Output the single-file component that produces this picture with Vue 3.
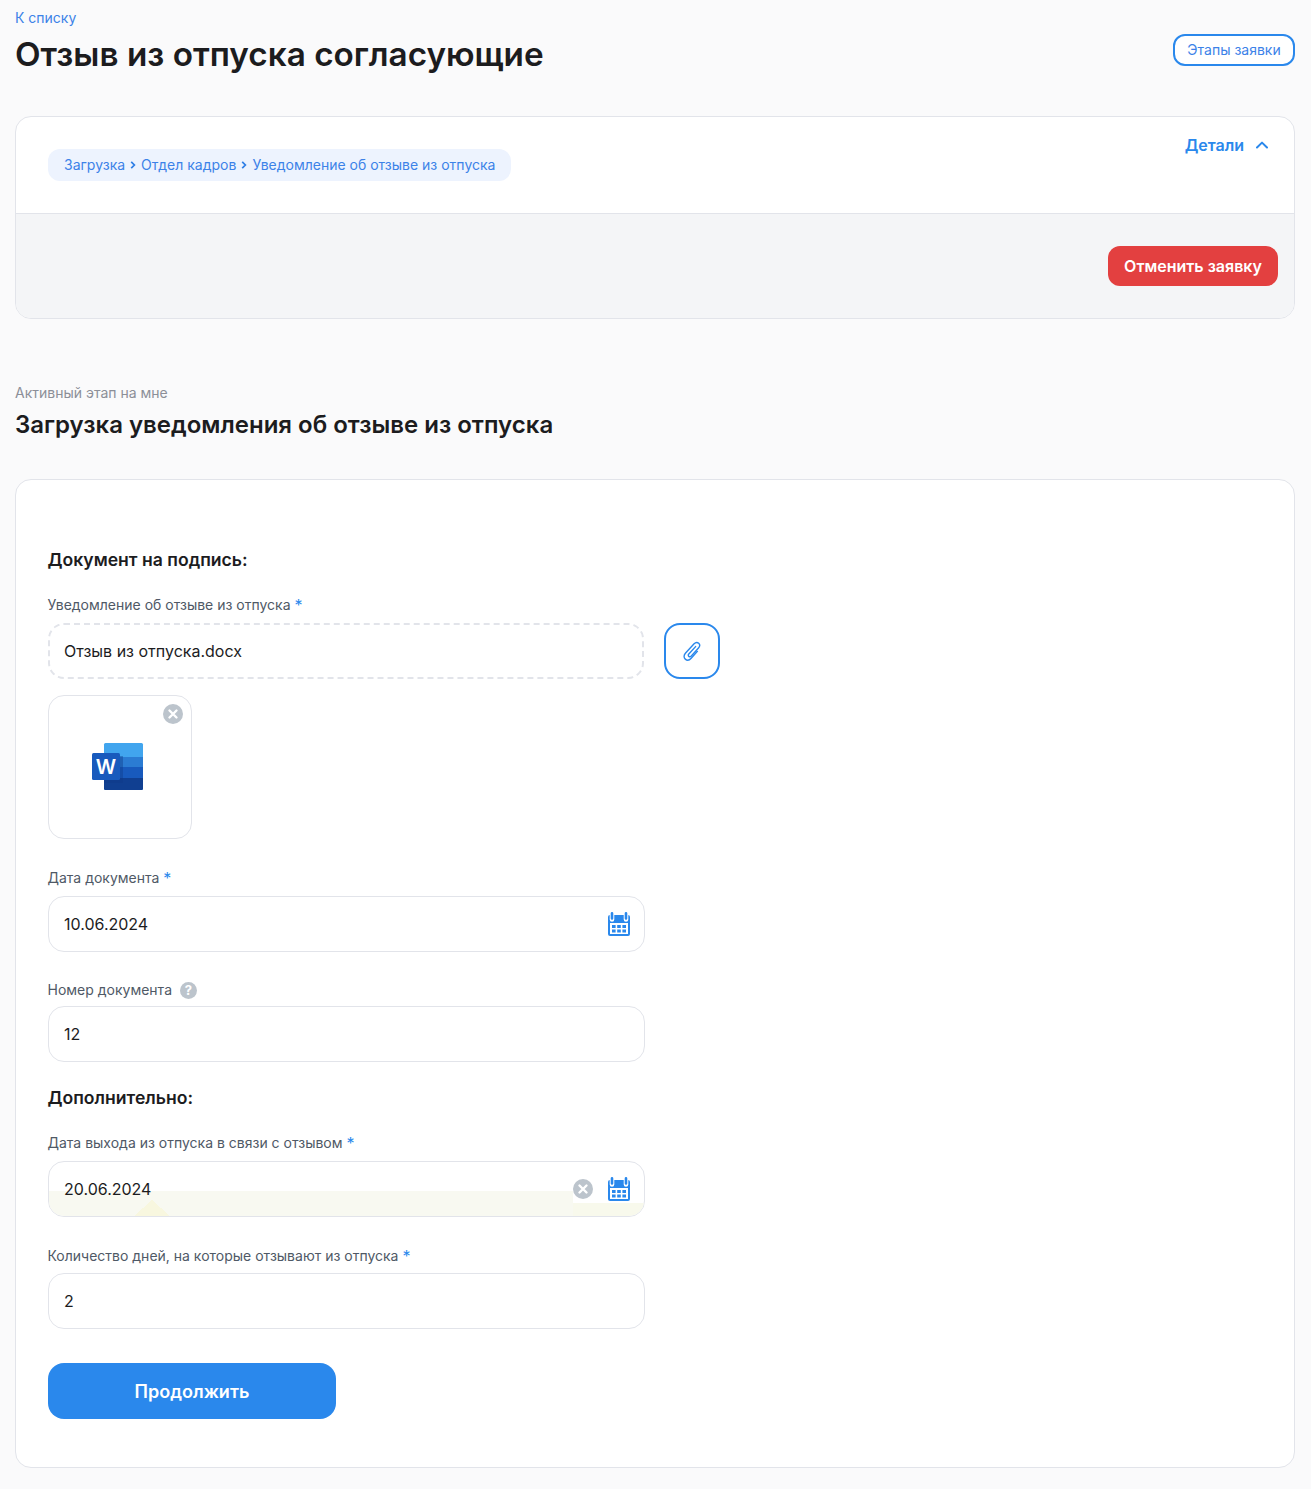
<script setup>
const crumbs = ['Загрузка', 'Отдел кадров', 'Уведомление об отзыве из отпуска']
</script>

<template>
  <div class="page">
    <a class="back">К списку</a>
    <header class="head">
      <h1>Отзыв из отпуска согласующие</h1>
      <button class="stages">Этапы заявки</button>
    </header>

    <section class="card summary">
      <div class="summary-top">
        <div class="crumbs">
          <template v-for="(c, i) in crumbs" :key="c">
            <span>{{ c }}</span>
            <svg v-if="i < crumbs.length - 1" width="6" height="8" viewBox="0 0 6 8"><path d="M1.2 .8L4.4 4 1.2 7.200" fill="none" stroke="#2f7fe6" stroke-width="1.7"/></svg>
          </template>
        </div>
        <div class="details">
          <span>Детали</span>
          <svg width="12" height="8" viewBox="0 0 12 8"><path d="M1 6.500L6 1.600l5 4.900" fill="none" stroke="#2a88ec" stroke-width="2" stroke-linecap="round" stroke-linejoin="round"/></svg>
        </div>
      </div>
      <div class="summary-bottom">
        <button class="cancel">Отменить заявку</button>
      </div>
    </section>

    <p class="active">Активный этап на мне</p>
    <h2>Загрузка уведомления об отзыве из отпуска</h2>

    <section class="card form">
      <h3 class="first">Документ на подпись:</h3>

      <label class="lab l1">Уведомление об отзыве из отпуска <i>*</i></label>
      <div class="file-row">
        <div class="drop">Отзыв из отпуска.docx</div>
        <button class="clip">
          <svg width="20" height="22" viewBox="0 0 20 22" fill="none" stroke="#2a88ec" stroke-width="1.4" stroke-linecap="round" stroke-linejoin="round">
            <path d="M13.600 6.600L6.800 14c-.8.9-.7 1.800 0 2.400.7.6 1.600.5 2.300-.3l7.400-8.100c1.500-1.700 1.500-3.500.2-4.700-1.300-1.200-3.100-1.100-4.600.5L3.600 13c-2 2.200-1.900 4.700-.3 6.100 1.600 1.400 3.900 1.300 5.900-.9l6.200-6.800"/>
          </svg>
        </button>
      </div>

      <div class="thumb">
        <svg class="close" width="20" height="20" viewBox="0 0 20 20">
          <circle cx="10" cy="10" r="10" fill="#bcc4cc"/>
          <path d="M6.500 6.500l7 7M13.500 6.500l-7 7" stroke="#fff" stroke-width="2.400" stroke-linecap="round"/>
        </svg>
        <svg class="word" width="52" height="48" viewBox="0 0 52 48">
          <rect x="12" y="0" width="39" height="47" rx="1.500" fill="#41a5ee"/>
          <rect x="12" y="14" width="39" height="10" fill="#2b7cd3"/>
          <rect x="12" y="24" width="39" height="11" fill="#185abd"/>
          <path d="M12 35h39v10.500a1.500 1.500 0 0 1-1.500 1.500H13.500a1.500 1.500 0 0 1-1.500-1.500z" fill="#103f91"/>
          <rect x="12" y="13" width="19" height="27" fill="#0f3a86" opacity=".4"/>
          <rect x="0" y="10" width="28" height="27" rx="1.500" fill="#185abd"/>
          <text x="14" y="30.500" text-anchor="middle" class="w">W</text>
        </svg>
      </div>

      <label class="lab l2">Дата документа <i>*</i></label>
      <div class="field">
        <span>10.06.2024</span>
        <svg class="cal" width="22" height="24" viewBox="0 0 22 24"><use href="#cal-icon"/></svg>
      </div>

      <label class="lab l3">Номер документа
        <span class="help">?</span>
      </label>
      <div class="field"><span>12</span></div>

      <h3 class="second">Дополнительно:</h3>

      <label class="lab l4">Дата выхода из отпуска в связи с отзывом <i>*</i></label>
      <div class="field tinted">
        <span>20.06.2024</span>
        <svg class="clear" width="20" height="20" viewBox="0 0 20 20">
          <circle cx="10" cy="10" r="10" fill="#bcc4cc"/>
          <path d="M6.500 6.500l7 7M13.500 6.500l-7 7" stroke="#fff" stroke-width="2.400" stroke-linecap="round"/>
        </svg>
        <svg class="cal" width="22" height="24" viewBox="0 0 22 24"><use href="#cal-icon"/></svg>
      </div>

      <label class="lab l5">Количество дней, на которые отзывают из отпуска <i>*</i></label>
      <div class="field"><span>2</span></div>

      <button class="go">Продолжить</button>
    </section>

    <svg width="0" height="0" class="defs">
      <symbol id="cal-icon" viewBox="0 0 22 24">
        <rect x="0" y="3" width="22" height="21" rx="2" fill="#2a88ec"/>
        <path fill="none" stroke="#fff" stroke-width="4.600" d="M4 1v6.500M18 1v6.500" stroke-linecap="round"/>
        <path fill="none" stroke="#2a88ec" stroke-width="2.600" stroke-linecap="round" d="M4 1.300v5.200M18 1.300v5.200"/>
        <rect x="2" y="11" width="18" height="11" fill="#fff"/>
        <g fill="#2a88ec">
          <rect x="4" y="13" width="3.600" height="3"/><rect x="9.200" y="13" width="3.600" height="3"/><rect x="14.400" y="13" width="3.600" height="3"/>
          <rect x="4" y="17.500" width="3.600" height="3"/><rect x="9.200" y="17.500" width="3.600" height="3"/><rect x="14.400" y="17.500" width="3.600" height="3"/>
        </g>
      </symbol>
    </svg>
  </div>
</template>

<style>
html, body { margin: 0; background: #fafafb; }
</style>

<style scoped>
.page {
  box-sizing: border-box;
  width: 1311px;
  height: 1489px;
  padding: 10px 16px 0 15px;
  background: #fafafb;
  font-family: Inter, "Liberation Sans", sans-serif;
  color: #1c1c1e;
}
.back { display: block; font-size: 14px; line-height: 15px; color: #3c82e8; }
.head { display: flex; justify-content: space-between; align-items: flex-start; margin-top: 7px; height: 84px; }
h1 { margin: 0; font-size: 33.300px; line-height: 44px; font-weight: 600; }
.stages {
  margin-top: 2px;
  box-sizing: border-box;
  width: 122px; height: 32px; padding: 0 0 2px;
  border: 2px solid #2a88ec; border-radius: 12px;
  background: #fff; color: #3c82e8;
  font: 400 14px Inter, sans-serif;
}
.card { box-sizing: border-box; width: 1280px; background: #fff; border: 1px solid #e2e4ea; border-radius: 16px; overflow: hidden; }
.summary { height: 203px; }
.summary-top { height: 97px; position: relative; padding: 32px 0 0 32px; box-sizing: border-box; border-bottom: 1px solid #e2e4ea; }
.crumbs {
  box-sizing: border-box;
  display: inline-flex; align-items: center; gap: 5px; height: 32px; padding: 0 16px 1px 16px;
  background: #edf3fe; border-radius: 12px;
  color: #3c82e8; font-size: 14px;
}
.details { position: absolute; top: 18px; right: 26px; display: flex; align-items: center; gap: 12px; color: #2a88ec; font-size: 16px; font-weight: 600; }
.summary-bottom { height: 104px; box-sizing: border-box; background: #f4f5f7; padding: 32px 16px 0 0; display: flex; justify-content: flex-end; align-items: flex-start; }
.cancel {
  width: 170px; height: 40px; border: 0; border-radius: 12px;
  background: #e34040; color: #fff; font: 600 16px Inter, sans-serif;
}
.active { margin: 65px 0 0; font-size: 14px; line-height: 18px; color: #8c8f98; }
h2 { margin: 6px 0 0; font-size: 24px; line-height: 34px; font-weight: 600; }
.form { margin-top: 37px; height: 989px; padding: 0 32px; }
h3 { margin: 0 0 0 -.5px; font-size: 17.600px; line-height: 24px; font-weight: 600; }
.first { padding-top: 68px; }
.lab { display: flex; align-items: center; gap: 0; margin-left: -.5px; font-size: 14px; line-height: 18px; color: #4f5966; white-space: pre; }
.lab i { font-style: normal; color: #2a88ec; font-size: 16px; line-height: 18px; }
.l1 { margin-top: 24px; }
.file-row { display: flex; gap: 20px; margin-top: 9px; }
.drop {
  box-sizing: border-box; width: 596px; height: 56px; padding-left: 14px;
  display: flex; align-items: center;
  border: 2px dashed #e2e4ea; border-radius: 16px;
  font-size: 16px;
}
.clip { box-sizing: border-box; width: 56px; height: 56px; padding: 0; border: 2px solid #2a88ec; border-radius: 16px; background: #fff; display: flex; align-items: center; justify-content: center; }
.thumb {
  position: relative; box-sizing: border-box; width: 144px; height: 144px; margin-top: 16px;
  border: 1px solid #e2e4ea; border-radius: 16px;
  display: flex; align-items: center; justify-content: center;
}
.word { margin: 0 0 0 -5px; }
.w { font: 600 20px Inter, "Liberation Sans", sans-serif; fill: #fff; }
.close { position: absolute; top: 8px; right: 8px; }
.l2 { margin-top: 30px; }
.field {
  position: relative; box-sizing: border-box; width: 597px; height: 56px; margin-top: 9px; padding: 0 15px;
  display: flex; align-items: center;
  border: 1px solid #e2e4ea; border-radius: 16px; background: #fff;
  font-size: 16px; overflow: hidden;
}
.field > span { position: relative; z-index: 1; }
.cal { position: absolute; right: 14px; top: 15px; z-index: 1; }
.clear { position: absolute; right: 51px; top: 17px; z-index: 1; }
.l3 { margin-top: 29px; gap: 4px; height: 18px; }
.l3 + .field { margin-top: 7px; }
.help { width: 17px; height: 17px; border-radius: 50%; background: #bcc4cc; color: #fff; font-size: 13px; font-weight: 700; display: flex; align-items: center; justify-content: center; }
.second { margin-top: 24px; }
.l4 { margin-top: 24px; }
.tinted::before {
  content: ""; position: absolute; left: 0; width: 524px; top: 29px; bottom: 0;
  background:
    linear-gradient(to top right, #f8f7df 50%, transparent 50%) 103px 100% / 18px 16px no-repeat,
    linear-gradient(to top left, #f8f7df 50%, transparent 50%) 85px 100% / 18px 16px no-repeat,
    #f8f9f1;
}
.tinted::after {
  content: ""; position: absolute; left: 524px; right: 0; top: 41px; bottom: 0;
  background: #f8f9ec;
}
.l5 { margin-top: 30px; }
.l5 + .field { margin-top: 8px; }
.go {
  display: block; width: 288px; height: 56px; margin-top: 34px; border: 0; border-radius: 16px;
  background: #2a88ec; color: #fff; font: 600 18px Inter, sans-serif;
}
.defs { position: absolute; }
</style>
